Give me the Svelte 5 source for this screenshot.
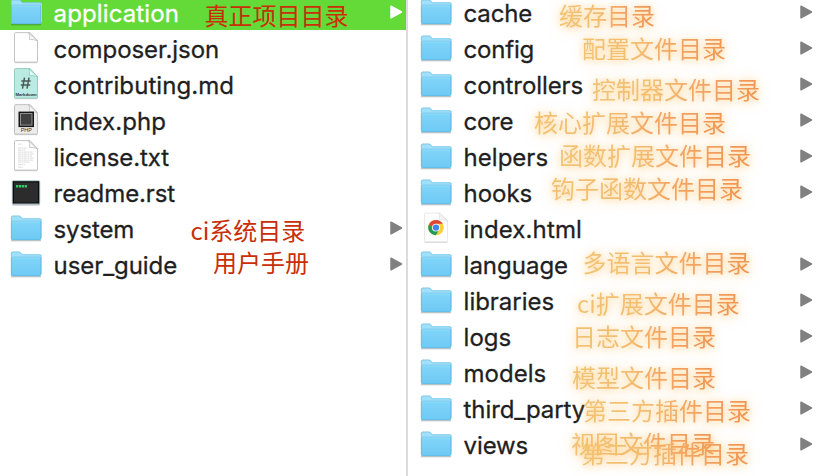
<script>
  const left = [
    { name: 'application', icon: 'folder', dir: true, active: true, w: 124 },
    { name: 'composer.json', icon: 'blank', w: 164 },
    { name: 'contributing.md', icon: 'markdown', w: 179 },
    { name: 'index.php', icon: 'php', w: 111 },
    { name: 'license.txt', icon: 'text', w: 114 },
    { name: 'readme.rst', icon: 'terminal', w: 120 },
    { name: 'system', icon: 'folder', dir: true, w: 79 },
    { name: 'user_guide', icon: 'folder', dir: true, w: 122 }
  ];
  const right = [
    { name: 'cache', icon: 'folder', dir: true, w: 67 },
    { name: 'config', icon: 'folder', dir: true, w: 69 },
    { name: 'controllers', icon: 'folder', dir: true, w: 118 },
    { name: 'core', icon: 'folder', dir: true, w: 48 },
    { name: 'helpers', icon: 'folder', dir: true, w: 83 },
    { name: 'hooks', icon: 'folder', dir: true, w: 67 },
    { name: 'index.html', icon: 'chrome', w: 117 },
    { name: 'language', icon: 'folder', dir: true, w: 103 },
    { name: 'libraries', icon: 'folder', dir: true, w: 89 },
    { name: 'logs', icon: 'folder', dir: true, w: 46 },
    { name: 'models', icon: 'folder', dir: true, w: 81 },
    { name: 'third_party', icon: 'folder', dir: true, w: 120 },
    { name: 'views', icon: 'folder', dir: true, w: 63 }
  ];
  const notes = [
    { text: '真正项目目录', x: 204.5, y: 3, red: true },
    { text: 'ci系统目录', x: 190.5, y: 218, red: true },
    { text: '用户手册', x: 213, y: 250, red: true },
    { text: '缓存目录', x: 559, y: 3 },
    { text: '配置文件目录', x: 582, y: 36 },
    { text: '控制器文件目录', x: 592, y: 77 },
    { text: '核心扩展文件目录', x: 534, y: 110 },
    { text: '函数扩展文件目录', x: 559, y: 143 },
    { text: '钩子函数文件目录', x: 551, y: 176 },
    { text: '多语言文件目录', x: 582.5, y: 250 },
    { text: 'ci扩展文件目录', x: 577, y: 291 },
    { text: '日志文件目录', x: 572, y: 324 },
    { text: '模型文件目录', x: 572, y: 365 },
    { text: '第三方插件目录', x: 583, y: 398 },
    { text: '视图文件目录', x: 571, y: 431 },
    { text: '第三方插件目录', x: 581, y: 441 }
  ];

  function fit(node, width) {
    const gap = (width + 1.5 - node.getBoundingClientRect().width) / node.textContent.length;
    node.style.letterSpacing = `${gap}px`;
  }
</script>

{#snippet icon(kind)}
  <svg class="icon" width="32" height="36" viewBox="0 0 32 36">
    {#if kind === 'folder'}
      <g transform="translate(0 -.6)">
        <path d="M1 31.3h30" stroke="#000" stroke-opacity=".25" stroke-width="1.2" />
        <path d="M1 29V8q0-1.6 1.6-1.6h6.6q1 0 1.5.7l1.2 1.6q.4.5 1.4.5h17q1.7 0 1.7 1.6V29z" fill="#a0e0fb" />
        <path d="M1.3 11V8q0-1.4 1.4-1.4h6.4q1 0 1.5.7l1.2 1.6q.4.4 1.4.4h16.2q1.6 0 1.6 1.2" fill="none" stroke="#6fbfe2" stroke-width=".7" />
        <path d="M1 11.8h30v17.3q0 1.5-1.5 1.5h-27Q1 30.6 1 29z" fill="url(#front)" />
        <path d="M1.3 11.8v17q0 1.5 1.5 1.5h26.5q1.4 0 1.400-1.5v-17z" fill="none" stroke="#5cb8df" stroke-width=".7" />
        <path d="M1.8 12.500h28.4" stroke="#9be0fb" stroke-width=".8" />
      </g>
    {:else if kind === 'terminal'}
      <g transform="translate(0 -1.500)">
        <rect x="2" y="9" width="28" height="24" rx="1.5" fill="#b5b5b5" />
        <rect x="2.200" y="8.200" width="27.600" height="23.300" rx="1" fill="#0d0d0d" stroke="#b4d4da" stroke-width=".9" />
        <rect x="4" y="10" width="24" height="20" fill="#2c2c2c" />
        <path d="M6 13.8h11" stroke="#2ecc63" stroke-width="2.5" stroke-dasharray="2.3 .6" />
      </g>
    {:else}
      <g transform={kind === 'chrome' ? 'translate(0 -2.300) scale(1 .97)' : 'translate(0 -2.900)'}>
        <path d="M4.5 35.600h23" stroke="#ccc" stroke-width="1" />
        <path
          d="M5.5 5.500h14.600l7.400 8v20.500q0 1-1 1h-21q-1 0-1-1v-27.500q0-1 1-1z"
          fill={kind === 'markdown' ? '#b9ebe2' : kind === 'php' ? '#ececec' : '#fff'}
          stroke={kind === 'markdown' ? '#8dc8bd' : kind === 'chrome' ? '#e6e6e6' : '#bdbdbd'}
          stroke-width=".9"
        />
        <path
          d="M18.5 5.500q1.700 1.800 1 7 3.500-.7 8 1.200z"
          fill={kind === 'markdown' ? '#e4faf6' : '#f5f5f5'}
          stroke={kind === 'markdown' ? '#8dc8bd' : kind === 'chrome' ? '#ddd' : '#b9b9b9'}
          stroke-width=".7"
        />
        {#if kind === 'markdown'}
          <path d="M14.5 14.500l-2 11M19 14.500l-2 11M11.300 18h9.400M10.800 22h9.400" stroke="#4c5a58" stroke-width="1.500" fill="none" />
          <text x="16" y="32.800" class="cap bold" font-size="4.300">Markdown</text>
        {:else if kind === 'php'}
          <rect x="8.500" y="12.500" width="15.500" height="15.500" fill="#181818" />
          <rect x="10.500" y="14.500" width="11.500" height="11.500" fill="#404040" stroke="#aaa" stroke-width=".8" />
          <text x="16.300" y="33.200" class="cap" font-size="5.500">PHP</text>
        {:else if kind === 'text'}
          <path d="M8 9h4M8 13h9M8 15h7M8 17h15M8 19h16M8 21h14M8 23h16M8 25h15M8 27h12M8 29.500h7M8 32h5" stroke="#d6d6d6" stroke-width=".9" stroke-dasharray="3 .5 2 .4" />
        {:else if kind === 'chrome'}
          <circle cx="16" cy="20.500" r="7.800" fill="#fcd037" />
          <path d="M9.250 16.600a7.800 7.800 0 0 1 13.500 0H16L12.600 22.500z" fill="#df4436" />
          <path d="M9.250 16.600a7.800 7.800 0 0 0 6.500 11.700L19.400 22.500h-6.800z" fill="#239957" />
          <circle cx="16" cy="20.500" r="4" fill="#fff" />
          <circle cx="16" cy="20.500" r="3.200" fill="#4285e8" />
        {/if}
      </g>
    {/if}
  </svg>
{/snippet}

{#snippet column(rows)}
  {#each rows as row}
    <li class="row" class:active={row.active}>
      {@render icon(row.icon)}
      <span class="name"><span use:fit={row.w}>{row.name}</span></span>
      {#if row.dir}
        <svg class="arrow" width="13" height="14" viewBox="0 0 13 14">
          <path d="M1 1.200L11.500 7 1 12.800z" />
        </svg>
      {/if}
    </li>
  {/each}
{/snippet}

<svg class="defs" width="0" height="0">
  <linearGradient id="front" x1="0" y1="0" x2="0" y2="1">
    <stop offset="0" stop-color="#81d5fa" />
    <stop offset="1" stop-color="#6ec9f3" />
  </linearGradient>
</svg>

<main class="browser">
  <ul class="column first">{@render column(left)}</ul>
  <ul class="column second">{@render column(right)}</ul>
  {#each notes as note}
    <span class="note" class:red={note.red} style="left: {note.x}px; top: {note.y}px">
      <span class="ink">{note.text}</span>
    </span>
  {/each}
</main>

<style>
  :global(body) {
    margin: 0;
    background: #fff;
  }
  .defs {
    position: absolute;
  }
  .browser {
    position: relative;
    display: flex;
    width: 816px;
    height: 476px;
    overflow: hidden;
    background: #fff;
  }
  .column {
    list-style: none;
    margin: -6px 0 0;
    padding: 0;
    box-sizing: border-box;
  }
  .first {
    width: 408px;
    height: 482px;
    border-right: 2px solid #dcdcdc;
  }
  .second {
    width: 408px;
    padding-left: 2px;
  }
  .row {
    display: flex;
    align-items: center;
    box-sizing: border-box;
    height: 36px;
    padding: 0 3px 0 10px;
    color: #1f1f1f;
  }
  .active {
    background: #63da38;
    color: #fff;
  }
  .icon {
    flex: none;
    margin-right: 11.6px;
  }
  .name {
    flex: 1;
    font: 24px/36px Inter, 'Liberation Sans', sans-serif;
    -webkit-text-stroke: 0.3px currentColor;
    white-space: nowrap;
    padding-top: 3px;
  }
  .arrow {
    flex: none;
    fill: #808080;
    stroke: #808080;
    stroke-width: 1.5;
    stroke-linejoin: round;
  }
  .active .arrow {
    fill: #fff;
    stroke: #fff;
  }
  .cap {
    font-family: 'Liberation Sans', sans-serif;
    text-anchor: middle;
    fill: #333;
  }
  .bold {
    font-weight: 700;
  }
  .note {
    position: absolute;
    font: 24px/24px 'Noto Sans CJK SC', sans-serif;
    white-space: nowrap;
    filter: drop-shadow(0 1px 3px rgba(255, 185, 80, 0.35)) drop-shadow(0 1px 6px rgba(255, 185, 80, 0.5));
  }
  .ink {
    display: block;
    margin: -4px 0;
    padding: 4px 0;
    color: transparent;
    background: linear-gradient(90deg, #f2c273 0%, #f2bd70 40%, #f3a665 62%, #f09452 100%);
    -webkit-background-clip: text;
    background-clip: text;
  }
  .red {
    filter: none;
  }
  .red .ink {
    color: #c82e08;
    background: none;
  }
</style>
